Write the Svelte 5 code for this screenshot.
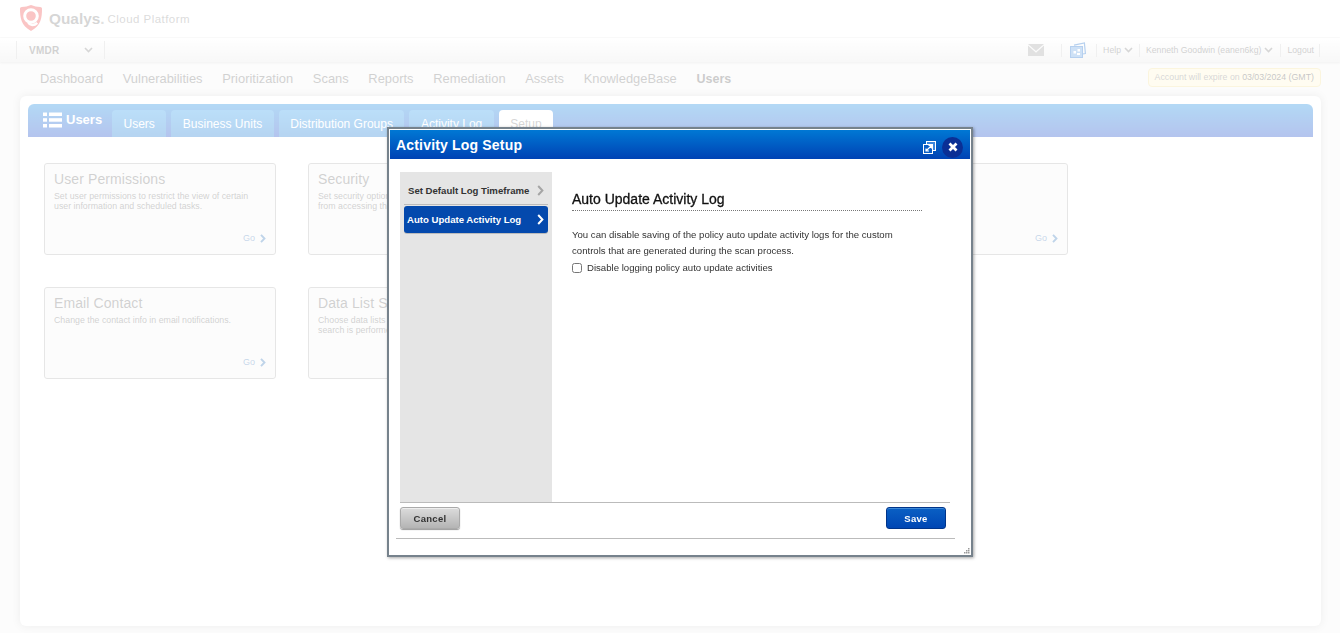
<script>
  const menu = ['Dashboard','Vulnerabilities','Prioritization','Scans','Reports','Remediation','Assets','KnowledgeBase','Users'];
  const tabs = ['Users','Business Units','Distribution Groups','Activity Log','Setup'];
  const cards = [
    {t:'User Permissions',d:'Set user permissions to restrict the view of certain\nuser information and scheduled tasks.'},
    {t:'Security',d:'Set security options to prevent users\nfrom accessing the application.'},
    {t:'Password',d:'Set the password rules for user accounts.'},
    {t:'Login',d:'Configure the login settings.'},
    {t:'Email Contact',d:'Change the contact info in email notifications.'},
    {t:'Data List Settings',d:'Choose data lists to show when a\nsearch is performed.'}
  ];
</script>

<div class="page">
  <header class="top">
    <svg class="logo" width="22" height="26" viewBox="0 0 22 26">
      <path d="M11 0C8 1.2 5 2 1.8 2 C0.7 2 0 2.7 0 3.8 C0 13 1 20.5 11 26 C21 20.5 22 13 22 3.8 C22 2.7 21.3 2 20.2 2 C17 2 14 1.2 11 0Z" fill="#ee3c3c"/>
      <circle cx="11" cy="11" r="6.3" fill="none" stroke="#fff" stroke-width="3"/>
      <path d="M8.5 17.6C10 20.4 14 21 17.2 17.8" fill="none" stroke="#fff" stroke-width="2.6"/>
    </svg>
    <span class="brand">Qualys<span class="dot">.</span></span>
    <span class="cloud">Cloud Platform</span>
  </header>

  <div class="bar">
    <div class="module">
      <span>VMDR</span>
      <svg class="chev" width="9" height="6" viewBox="0 0 9 6"><path d="M1 1l3.5 3.5L8 1" fill="none" stroke="#777" stroke-width="1.6"/></svg>
    </div>
    <div class="tools">
      <svg class="mail" width="16" height="12" viewBox="0 0 16 12"><path d="M0 0h16L8 7z" fill="#999"/><path d="M0 1.6v10.4h16V1.6L8 8.8z" fill="#999"/></svg>
      <span class="sep s1"></span>
      <svg class="gallery" width="16" height="16" viewBox="0 0 16 16">
        <path d="M4 3.2L14.4 1L15.4 11.5L12.5 12" fill="none" stroke="#0a62c8" stroke-width="1.2"/>
        <rect x="0.5" y="4.5" width="12" height="11" fill="#5a9be0" stroke="#0a62c8"/>
        <rect x="3.5" y="9" width="2.5" height="2.5" fill="#fff"/><rect x="7.5" y="7" width="2.5" height="2.5" fill="#fff"/><rect x="7" y="11" width="3" height="2" fill="#fff"/>
      </svg>
      <span class="sep s2"></span>
      <span class="tool">Help</span>
      <svg class="chev" width="9" height="6" viewBox="0 0 9 6"><path d="M1 1l3.5 3.5L8 1" fill="none" stroke="#777" stroke-width="1.6"/></svg>
      <span class="sep s3b"></span>
      <span class="tool">Kenneth Goodwin (eanen6kg)</span>
      <svg class="chev" width="9" height="6" viewBox="0 0 9 6"><path d="M1 1l3.5 3.5L8 1" fill="none" stroke="#777" stroke-width="1.6"/></svg>
      <span class="sep s3"></span>
      <span class="tool">Logout</span>
      <span class="sep s4"></span>
    </div>
  </div>

  <nav class="menu">
    <div class="items">
      {#each menu as m}<span class:active={m==='Users'}>{m}</span>{/each}
    </div>
    <div class="expire">Account will expire on <b>03/03/2024 (GMT)</b></div>
  </nav>

  <main class="panel">
    <div class="blue">
      <div class="section">
        <svg width="19" height="16" viewBox="0 0 19 16" fill="#fff">
          <rect x="0" y="0.5" width="4" height="3.5"/><rect x="6" y="0.5" width="13" height="3.5"/>
          <rect x="0" y="6.2" width="4" height="3.5"/><rect x="6" y="6.2" width="13" height="3.5"/>
          <rect x="0" y="12" width="4" height="3.5"/><rect x="6" y="12" width="13" height="3.5"/>
        </svg>
        <span>Users</span>
      </div>
      {#each tabs as t}<div class="tab" class:on={t==='Setup'}>{t}</div>{/each}
    </div>
    <div class="grid">
      {#each cards as c}
        <div class="card">
          <h3>{c.t}</h3>
          <p>{c.d}</p>
          <div class="go">Go
            <svg width="6" height="9" viewBox="0 0 6 9"><path d="M1 0.8L4.5 4.5L1 8.2" fill="none" stroke="#2a6fb5" stroke-width="1.9"/></svg>
          </div>
        </div>
      {/each}
    </div>
  </main>
</div>

<div class="mask"></div>

<div class="modal">
  <div class="title">
    <span>Activity Log Setup</span>
    <svg class="popout" width="13" height="13" viewBox="0 0 13 13">
      <rect x="3.5" y="0.5" width="9" height="9" fill="#3a86dc" stroke="#fff"/>
      <rect x="0.5" y="3.5" width="9" height="9" fill="#0a5ec6" stroke="#fff"/>
      <path d="M3 10L8.5 4.5M5.5 4.5H8.5V7.5M3 7.5V10H6" fill="none" stroke="#fff" stroke-width="1.2"/>
    </svg>
    <div class="close">
      <svg width="10" height="10" viewBox="0 0 10 10"><path d="M1.5 1.5L8.5 8.5M8.5 1.5L1.5 8.5" stroke="#fff" stroke-width="2.8"/></svg>
    </div>
  </div>
  <div class="body">
    <div class="side">
      <div class="step">
        <span>Set Default Log Timeframe</span>
        <svg width="7" height="11" viewBox="0 0 7 11"><path d="M1.2 1L5.4 5.5L1.2 10" fill="none" stroke="#a5a5a5" stroke-width="2"/></svg>
      </div>
      <div class="step cur">
        <span>Auto Update Activity Log</span>
        <svg width="7" height="11" viewBox="0 0 7 11"><path d="M1.2 1L5.4 5.5L1.2 10" fill="none" stroke="#fff" stroke-width="2"/></svg>
      </div>
    </div>
    <div class="content">
      <h2>Auto Update Activity Log</h2>
      <p>You can disable saving of the policy auto update activity logs for the custom<br>controls that are generated during the scan process.</p>
      <label><input type="checkbox"><span>Disable logging policy auto update activities</span></label>
    </div>
  </div>
  <div class="actions">
    <button class="cancel">Cancel</button>
    <button class="save">Save</button>
  </div>
  <div class="rule"></div>
  <svg class="grip" width="6" height="6" viewBox="0 0 6 6" fill="#999"><rect x="4" y="0" width="1.5" height="1.5"/><rect x="2" y="2" width="1.5" height="1.5"/><rect x="4" y="2" width="1.5" height="1.5"/><rect x="0" y="4" width="1.5" height="1.5"/><rect x="2" y="4" width="1.5" height="1.5"/><rect x="4" y="4" width="1.5" height="1.5"/></svg>
</div>

<style>
  :global(body){margin:0;background:#fff;font-family:"Liberation Sans",Arial,sans-serif;overflow:hidden}
  .page{height:633px;background:#f4f4f4;display:flex;flex-direction:column;overflow:hidden}
  .top{height:38px;background:#fff;display:flex;align-items:center;padding-left:20px;box-sizing:border-box;border-bottom:1px solid #eee}
  .logo{margin-top:-1px}
  .brand{margin-left:7px;font-size:15.4px;font-weight:700;color:#777}
  .dot{color:#999}
  .cloud{margin-left:3px;font-size:11.5px;color:#888;letter-spacing:.45px}
  .bar{height:24px;background:linear-gradient(#fff,#e6e6e6);display:flex;justify-content:space-between;align-items:center;box-sizing:border-box;box-shadow:0 1px 2px rgba(0,0,0,.15);padding-right:20px;position:relative}
  .module{margin-left:16px;width:89px;height:18px;box-sizing:border-box;border-left:1px solid #ccc;border-right:1px solid #ccc;display:flex;align-items:center;justify-content:space-between;padding:0 11px 0 12px;font-size:10px;font-weight:700;color:#666;letter-spacing:.3px}
  .tools{display:flex;align-items:center;font-size:8.7px;color:#666}
  .sep{width:1px;height:13px;background:#ccc;display:block}
  .s1{margin:0 8px 0 17px}.s2{margin:0 6px 0 10px}.s3{margin:0 6px 0 7px}.s3b{margin:0 6px 0 6px}.s4{margin-left:5px}
  .chev{margin-left:3px}
  .tool{white-space:nowrap}
  .menu{height:34px;display:flex;justify-content:space-between;padding:0 19px 0 40px;box-sizing:border-box}
  .items{display:flex;gap:19.7px;font-size:12.9px;color:#666;padding-top:9px}
  .items .active{font-weight:700;color:#555;font-size:12.5px;padding-top:1px}
  .expire{margin-top:6px;height:19px;box-sizing:border-box;border:1px solid #f0dc90;border-radius:4px;background:#fff6d0;padding:0 6px;font-size:8.8px;line-height:17px;color:#777}
  .expire b{font-weight:400;color:#444}
  .panel{margin:0 19px 7px 20px;flex:1;background:#fff;border-radius:6px;padding:8px;box-shadow:0 0 8px rgba(0,0,0,.2)}
  .blue{height:33px;border-radius:6px 6px 0 0;background:linear-gradient(#027fde,#053ac6);display:flex;align-items:flex-end;padding-left:15px;gap:5px;overflow:hidden}
  .section{align-self:flex-start;margin-top:8px;width:64px;display:flex;gap:4px;color:#fff;font-size:13px;font-weight:700;line-height:16px}
  .tab{height:27px;box-sizing:border-box;padding:7px 11.5px 0;background:linear-gradient(#1c92ea,#0a70d0);color:#fff;font-size:12px;border-radius:4px 4px 0 0;white-space:nowrap}
  .tab.on{background:#fff;color:#777}
  .grid{display:grid;grid-template-columns:repeat(4,232px);gap:32px;padding:26px 16px 0;align-content:start}
  .card{height:92px;box-sizing:border-box;border:1px solid #aaa;border-radius:3px;background:#f6f6f6;padding:7px 9px;position:relative}
  .card h3{margin:0;font-size:14px;font-weight:400;color:#666;line-height:16px;letter-spacing:.1px}
  .card p{margin:4px 0 0;font-size:8.8px;color:#666;line-height:10px;white-space:pre-line}
  .go{position:absolute;right:9px;bottom:11px;font-size:9px;color:#3f76b5;display:flex;align-items:center;gap:5px}
  .grid .card:nth-child(5){grid-column:1}
  .mask{position:fixed;inset:0;background:rgba(255,255,255,.7)}
  .modal{position:fixed;left:387px;top:127px;width:586px;height:430px;box-sizing:border-box;border:2px solid #76828c;padding:1px;background:#fff;box-shadow:1px 1px 3px rgba(0,0,0,.35);color:#333}
  .title{height:29px;background:linear-gradient(#0078d4,#0042b4);display:flex;align-items:center;padding:0 7px 0 6px;color:#fff;font-size:14px;font-weight:700;letter-spacing:.18px;box-sizing:border-box}
  .title span{flex:1}
  .close{width:21px;height:21px;border-radius:50%;background:#0a2f95;display:flex;align-items:center;justify-content:center;margin:5px 0 0 6px}
  .popout{display:block;margin-top:5px}
  .body{display:flex;margin:13px 20px 0 10px;border-bottom:1px solid #bbb;height:330px}
  .side{width:152px;background:#e5e5e5;padding:4px;box-sizing:border-box}
  .step{height:29px;box-sizing:border-box;border-bottom:1px solid #bbb;display:flex;align-items:center;justify-content:space-between;padding:0 4px;font-size:9.6px;font-weight:700;color:#333}
  .step.cur{background:#0449ad;color:#fff;border-radius:3px;border-bottom:0;height:27px;margin-top:1px;padding:0 4px 0 3px;box-shadow:0 1px 0 #bbb}
  .content{padding:19px 0 0 20px;width:350px}
  .content h2{margin:0;font-size:14px;font-weight:400;color:#111;-webkit-text-stroke:.3px #111;line-height:16px;padding-bottom:3px;border-bottom:1px dotted #777}
  .content p{margin:16px 0 0;font-size:9.6px;line-height:16px;color:#333}
  .content label{display:flex;align-items:center;font-size:9.6px;line-height:14px;margin-top:2px}
  .content input{margin:0 5px 0 0;width:10px;height:10px}
  .actions{display:flex;justify-content:space-between;margin:4px 24px 0 10px}
  button{height:22px;width:60px;font:700 9.5px "Liberation Sans",Arial,sans-serif;letter-spacing:.3px;border-radius:3px;padding:0}
  .cancel{background:linear-gradient(#dcdcdc,#b4b4b4);border:1px solid #aaa;color:#333;box-shadow:inset 0 1px 0 #eee,0 1px 1px #999}
  .save{background:linear-gradient(#0a60c4,#0046b4);border:1px solid #00348a;color:#fff;box-shadow:inset 0 1px 0 #3f8ad8}
  .rule{margin:9px 15px 0 6px;height:1px;background:#bbb}
  .grip{position:absolute;right:1px;bottom:1px}
</style>
